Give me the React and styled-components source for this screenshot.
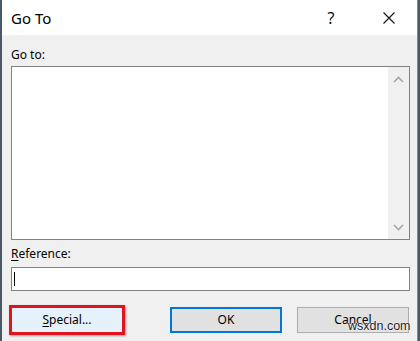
import React from 'react'
import styled, { createGlobalStyle } from 'styled-components'

const GlobalStyle = createGlobalStyle`
  html, body {
    margin: 0;
    padding: 0;
    background: #4b5866;
  }
  body {
    font-family: "Noto Sans", "Liberation Sans", sans-serif;
    color: #000;
  }
`

const Window = styled.div`
  width: 415px;
  height: 341px;
  margin-left: 2px;
  border-right: 1px solid #8a8a8a;
  background: #f0f0f0;
  display: flex;
  flex-direction: column;
  overflow: hidden;
`

const TitleBar = styled.div`
  height: 35px;
  flex: none;
  background: #fff;
  display: flex;
  align-items: center;
  padding: 0 5px 0 9px;
`

const Title = styled.span`
  font-size: 15px;
  line-height: 20px;
  flex: 1;
`

const TitleButton = styled.div`
  width: 46px;
  height: 35px;
  margin-right: ${({ mr }) => mr || 0}px;
  display: flex;
  align-items: center;
  justify-content: center;
  font-size: 16px;
  color: #111;
`

const Body = styled.div`
  flex: 1;
  display: flex;
  flex-direction: column;
  padding: 12px 7px 0 9px;
`

const Label = styled.div`
  font-size: 12px;
  line-height: 16px;
  margin-top: ${({ mt }) => mt || 0}px;
  margin-bottom: ${({ mb }) => mb || 0}px;
`

const Key = styled.span`
  text-decoration: underline;
  text-underline-offset: 2px;
`

const ListBox = styled.div`
  height: 174px;
  box-sizing: border-box;
  border: 1px solid #828282;
  background: #fff;
  display: flex;
  justify-content: flex-end;
`

const ScrollBar = styled.div`
  width: 21px;
  background: #f0f0f0;
  display: flex;
  flex-direction: column;
  justify-content: space-between;
  align-items: center;
  padding: 9px 0 8px;
`

const TextBox = styled.div`
  height: 24px;
  box-sizing: border-box;
  border: 1px solid #828282;
  background: #fff;
  display: flex;
  align-items: center;
  padding-left: 2px;
`

const Caret = styled.span`
  width: 1px;
  height: 14px;
  background: #000;
`

const Footer = styled.div`
  display: flex;
  margin-top: 16px;
`

const Button = styled.div`
  position: relative;
  width: 112px;
  height: 26px;
  box-sizing: border-box;
  margin-left: ${({ ml }) => ml || 0}px;
  border: ${({ primary }) => (primary ? '2px solid #0078d7' : '1px solid #adadad')};
  background: ${({ hot }) => (hot ? '#e5f1fb' : '#e1e1e1')};
  display: flex;
  align-items: center;
  justify-content: center;
  font-size: 12px;
  line-height: 16px;
  color: #000;
`

const Highlight = styled.div`
  position: absolute;
  inset: -3px;
  border: 3px solid #e0141e;
  box-shadow: 1px 1px 2px rgba(0, 0, 0, 0.35);
`

const Watermark = styled.span`
  position: absolute;
  left: 50px;
  top: 10px;
  font-family: "Liberation Sans", Arial, sans-serif;
  font-size: 12.5px;
  color: #222;
  text-shadow: 0 0 2px #fff, 0 0 1px #fff;
`

function Chevron({ up }) {
  return (
    <svg width="11" height="7" viewBox="0 0 11 7">
      <path
        d={up ? 'M1 6 L5.5 1.5 L10 6' : 'M1 1 L5.5 5.5 L10 1'}
        fill="none"
        stroke="#a6a6a6"
        strokeWidth="1.6"
      />
    </svg>
  )
}

export default function App() {
  return (
    <>
      <GlobalStyle />
      <Window>
        <TitleBar>
          <Title>Go To</Title>
          <TitleButton mr={12}>?</TitleButton>
          <TitleButton>
            <svg width="12" height="12" viewBox="0 0 12 12">
              <path d="M0.5 0.5 L11.5 11.5 M11.5 0.5 L0.5 11.5" stroke="#111" strokeWidth="1.1" />
            </svg>
          </TitleButton>
        </TitleBar>
        <Body>
          <Label mb={3}>Go to:</Label>
          <ListBox>
            <ScrollBar>
              <Chevron up />
              <Chevron />
            </ScrollBar>
          </ListBox>
          <Label mt={6} mb={5}>
            <Key>R</Key>eference:
          </Label>
          <TextBox>
            <Caret />
          </TextBox>
          <Footer>
            <Button hot>
              <Highlight />
              <span>
                <Key>S</Key>pecial...
              </span>
            </Button>
            <Button primary ml={47}>OK</Button>
            <Button ml={15}>
              Cancel
              <Watermark>wsxdn.com</Watermark>
            </Button>
          </Footer>
        </Body>
      </Window>
    </>
  )
}
